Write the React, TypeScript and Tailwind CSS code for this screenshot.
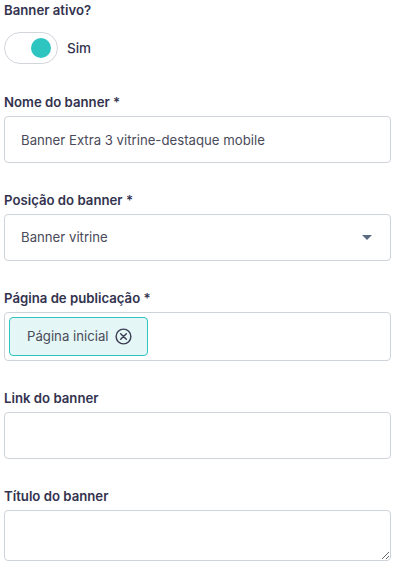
import { useState } from "react";

const labelCls = "block text-[13.2px] leading-5 font-semibold text-[#33334f] mb-1";
const boxCls = "w-full h-[47px] rounded-[4px] border border-[#cfd4da] bg-white";

export default function App() {
  const [ativo, setAtivo] = useState(true);

  return (
    <div className="min-h-screen bg-white pl-1 pr-[5px] pt-0 font-['Inter',sans-serif]">
      {/* Banner ativo */}
      <div className="mb-[28px]">
        <label className={labelCls + " mb-3"}>Banner ativo?</label>
        <div className="flex items-center gap-[9px]">
          <button
            onClick={() => setAtivo(!ativo)}
            className="relative w-[54px] h-[32px] rounded-full border border-[#d2d6db] bg-white"
          >
            <span
              className={
                "absolute top-[5px] w-[20px] h-[20px] rounded-full bg-[#2ec4c0] " +
                (ativo ? "left-[26px]" : "left-[5px]")
              }
            />
          </button>
          <span className="text-[13.5px] font-medium text-[#33334f]">Sim</span>
        </div>
      </div>

      {/* Nome */}
      <div className="mb-[27px]">
        <label className={labelCls}>Nome do banner *</label>
        <input
          className={boxCls + " px-4 text-[13.2px] text-[#4a4a5a] outline-none"}
          defaultValue="Banner Extra 3 vitrine-destaque mobile"
        />
      </div>

      {/* Posição */}
      <div className="mb-[27px]">
        <label className={labelCls}>Posição do banner *</label>
        <div className={boxCls + " flex items-center justify-between px-4"}>
          <span className="text-[13.2px] text-[#4a4a5a]">Banner vitrine</span>
          <svg width="10" height="5" viewBox="0 0 10 5" className="mr-[2px]">
            <path d="M0 0h10L5 5z" fill="#5b6b80" />
          </svg>
        </div>
      </div>

      {/* Página */}
      <div className="mb-[27px]">
        <label className={labelCls}>Página de publicação *</label>
        <div className="w-full h-[49px] rounded-[4px] border border-[#cfd4da] bg-white p-1 flex">
          <div className="h-[39px] flex items-center gap-[6px] pl-[17px] pr-[15px] rounded-[4px] border border-[#2ec4c0] bg-[#e4f6f6]">
            <span className="text-[13.2px] text-[#4a4a5a]">Página inicial</span>
            <svg width="17" height="17" viewBox="0 0 18 18" fill="none" stroke="#3c3c55" strokeWidth="1.5">
              <circle cx="9" cy="9" r="7.8" />
              <path d="M6 6l6 6M12 6l-6 6" strokeLinecap="round" />
            </svg>
          </div>
        </div>
      </div>

      {/* Link */}
      <div className="mb-[27px]">
        <label className={labelCls}>Link do banner</label>
        <input className={boxCls + " px-4 text-[13.2px] text-[#4a4a5a] outline-none"} />
      </div>

      {/* Título */}
      <div>
        <label className={labelCls}>Título do banner</label>
        <textarea className="w-full h-[51px] rounded-[4px] border border-[#cfd4da] bg-white px-4 py-2 text-[13.2px] text-[#4a4a5a] outline-none block" />
      </div>
    </div>
  );
}
